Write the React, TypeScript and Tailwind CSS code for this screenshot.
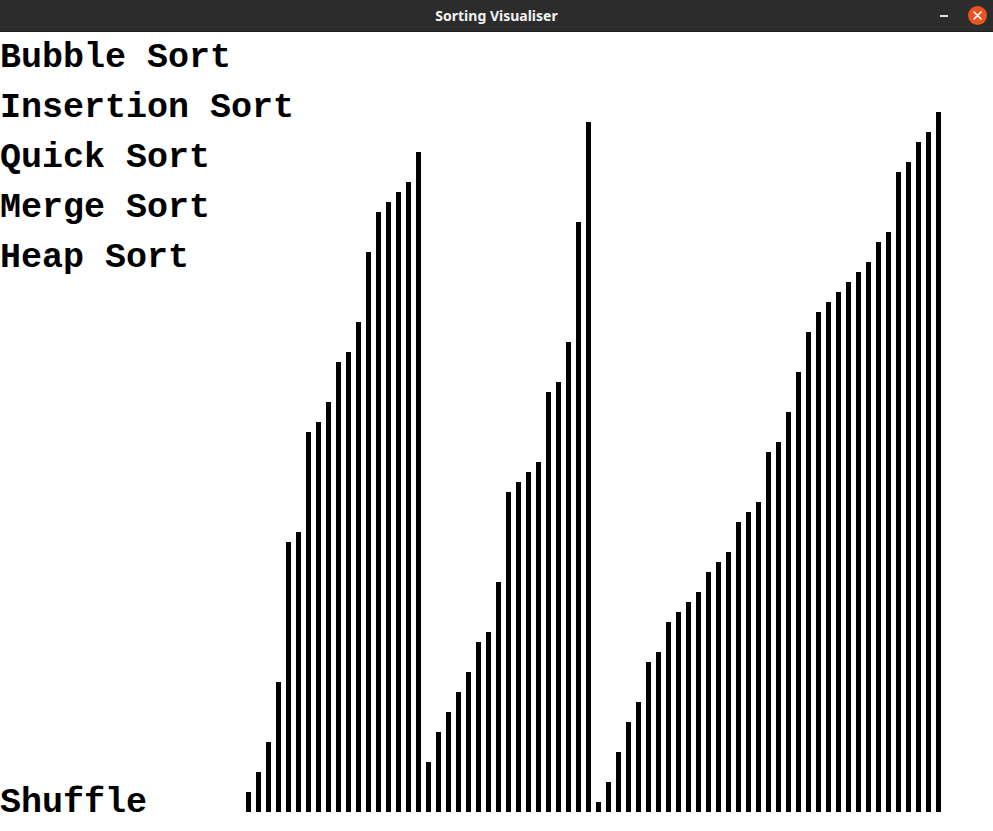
const menu = ["Bubble Sort", "Insertion Sort", "Quick Sort", "Merge Sort", "Heap Sort"];

// bar heights in px, left to right
const bars = [
  20, 40, 70, 130, 270, 280, 380, 390, 410, 450, 460, 490, 560, 600, 610, 620, 630, 660,
  50, 80, 100, 120, 140, 170, 180, 230, 320, 330, 340, 350, 420, 430, 470, 590, 690,
  10, 30, 60, 90, 110, 150, 160, 190, 200, 210, 220, 240, 250, 260, 290, 300, 310, 360, 370,
  400, 440, 480, 500, 510, 520, 530, 540, 550, 570, 580, 640, 650, 670, 680, 700,
];

function TitleBar() {
  return (
    <div className="relative flex h-[32px] items-center justify-center border-b border-[#1f1f1f] bg-[#2c2c2c]">
      <span
        className="text-[14px] font-bold text-[#f2f2f2]"
        style={{ fontFamily: "'Noto Sans', Roboto, sans-serif" }}
      >
        Sorting Visualiser
      </span>
      <div className="absolute right-[6px] top-0 flex h-[31px] items-center gap-[20px]">
        <div className="h-[2px] w-[8px] bg-[#e0e0e0]" />
        <div className="flex h-[19px] w-[19px] items-center justify-center rounded-full bg-[#e95420]">
          <svg width="9" height="9" viewBox="0 0 9 9">
            <path d="M1 1L8 8M8 1L1 8" stroke="#ffffff" strokeWidth="1.6" strokeLinecap="round" />
          </svg>
        </div>
      </div>
    </div>
  );
}

export default function App() {
  return (
    <div className="flex h-[831px] w-[993px] flex-col overflow-hidden bg-white">
      <TitleBar />
      <div className="grid flex-1">
        <div className="col-start-1 row-start-1 flex items-end gap-[5px] pb-[19px] pl-[246px]">
          {bars.map((h, i) => (
            <div key={i} className="w-[5px] shrink-0 bg-black" style={{ height: h }} />
          ))}
        </div>
        <div
          className="col-start-1 row-start-1 flex flex-col justify-between pb-[3px] pt-[1px] text-[35px] font-bold leading-[50px] text-black"
          style={{ fontFamily: "'Liberation Mono', 'Courier New', monospace" }}
        >
          <div className="flex flex-col">
            {menu.map((m) => (
              <span key={m} className="whitespace-pre">
                {m}
              </span>
            ))}
          </div>
          <span>Shuffle</span>
        </div>
      </div>
    </div>
  );
}
